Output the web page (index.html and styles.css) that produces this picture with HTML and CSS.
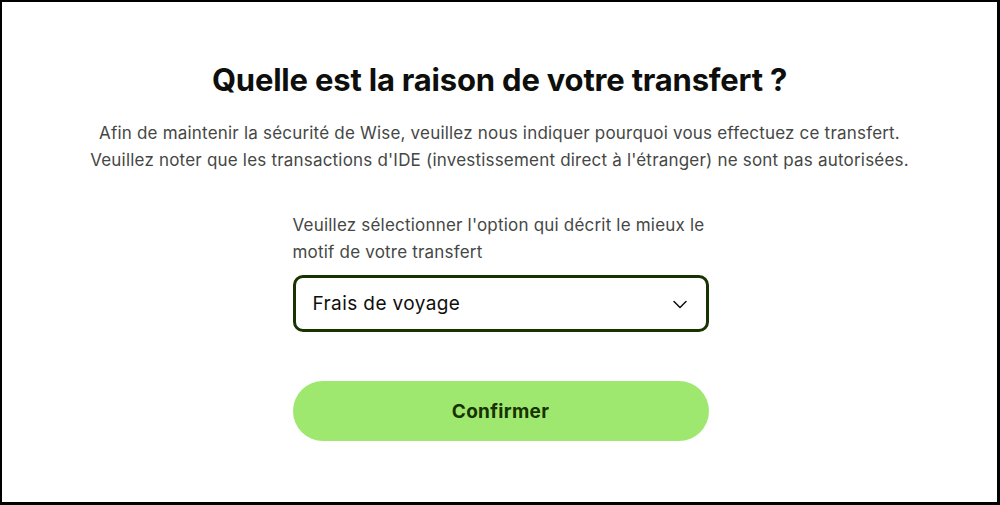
FILE: index.html
```html
<!DOCTYPE html>
<html lang="fr">
<head>
<meta charset="utf-8">
<link rel="stylesheet" href="styles.css">
</head>
<body>
<div class="frame">
  <h1 class="title">Quelle est la raison de votre transfert ?</h1>
  <p class="intro">Afin de maintenir la sécurité de Wise, veuillez nous indiquer pourquoi vous effectuez ce transfert.<br>Veuillez noter que les transactions d'IDE (investissement direct à l'étranger) ne sont pas autorisées.</p>
  <div class="form">
    <label class="label">Veuillez sélectionner l'option qui décrit le mieux le motif de votre transfert</label>
    <div class="select">
      <span class="value">Frais de voyage</span>
      <svg class="chevron" width="16" height="16" viewBox="0 0 16 16"><path d="M2 5.5 L8 11.5 L14 5.5" fill="none" stroke="#0e0f0c" stroke-width="1.5" stroke-linecap="round" stroke-linejoin="round"/></svg>
    </div>
    <button class="btn">Confirmer</button>
  </div>
</div>
</body>
</html>
```
FILE: styles.css
```css
html, body {
  margin: 0;
  padding: 0;
  background: #fff;
}
.frame {
  box-sizing: border-box;
  width: 1000px;
  height: 505px;
  border: 2px solid #000;
  border-right-width: 3px;
  border-bottom-width: 3px;
  display: flex;
  flex-direction: column;
  align-items: center;
  font-family: Inter, "Noto Sans", sans-serif;
  color: #0e0f0c;
}
.title {
  margin: 58px 0 0;
  font-size: 31px;
  line-height: 40px;
  font-weight: 700;
  letter-spacing: -0.2px;
}
.intro {
  margin: 20px 0 0;
  font-size: 17px;
  line-height: 27px;
  letter-spacing: 0.2px;
  color: #454745;
  text-align: center;
}
.form {
  width: 416px;
  margin: 38px 0 0 2px;
  display: flex;
  flex-direction: column;
}
.label {
  font-size: 17px;
  line-height: 27px;
  letter-spacing: 0.2px;
  color: #454745;
  padding-right: 4px;
}
.select {
  box-sizing: border-box;
  margin-top: 9px;
  height: 57px;
  border: 3px solid #163300;
  border-radius: 10px;
  display: flex;
  align-items: center;
  justify-content: space-between;
  padding: 0 18px 0 17px;
}
.value {
  font-size: 19px;
  letter-spacing: 0.4px;
  color: #0e0f0c;
}
.btn {
  margin-top: 49px;
  height: 60px;
  width: 416px;
  border: none;
  border-radius: 30px;
  background: #9fe870;
  color: #163300;
  font-family: Inter, "Noto Sans", sans-serif;
  font-size: 19px;
  letter-spacing: 0.3px;
  font-weight: 700;
}
```
